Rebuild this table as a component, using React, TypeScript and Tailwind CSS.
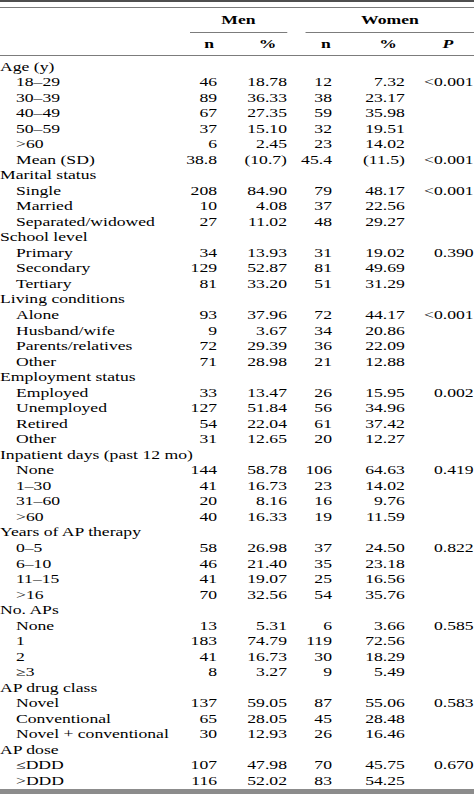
import React from "react";

type Row =
  | { kind: "cat"; label: string }
  | { kind: "item"; label: string; mn: string; mp: string; wn: string; wp: string; p?: string };

const c = (label: string): Row => ({ kind: "cat", label });
const r = (label: string, mn: string, mp: string, wn: string, wp: string, p?: string): Row => ({
  kind: "item",
  label,
  mn,
  mp,
  wn,
  wp,
  p,
});

const rows: Row[] = [
  c("Age (y)"),
  r("18–29", "46", "18.78", "12", "7.32", "<0.001"),
  r("30–39", "89", "36.33", "38", "23.17"),
  r("40–49", "67", "27.35", "59", "35.98"),
  r("50–59", "37", "15.10", "32", "19.51"),
  r(">60", "6", "2.45", "23", "14.02"),
  r("Mean (SD)", "38.8", "(10.7)", "45.4", "(11.5)", "<0.001"),
  c("Marital status"),
  r("Single", "208", "84.90", "79", "48.17", "<0.001"),
  r("Married", "10", "4.08", "37", "22.56"),
  r("Separated/widowed", "27", "11.02", "48", "29.27"),
  c("School level"),
  r("Primary", "34", "13.93", "31", "19.02", "0.390"),
  r("Secondary", "129", "52.87", "81", "49.69"),
  r("Tertiary", "81", "33.20", "51", "31.29"),
  c("Living conditions"),
  r("Alone", "93", "37.96", "72", "44.17", "<0.001"),
  r("Husband/wife", "9", "3.67", "34", "20.86"),
  r("Parents/relatives", "72", "29.39", "36", "22.09"),
  r("Other", "71", "28.98", "21", "12.88"),
  c("Employment status"),
  r("Employed", "33", "13.47", "26", "15.95", "0.002"),
  r("Unemployed", "127", "51.84", "56", "34.96"),
  r("Retired", "54", "22.04", "61", "37.42"),
  r("Other", "31", "12.65", "20", "12.27"),
  c("Inpatient days (past 12 mo)"),
  r("None", "144", "58.78", "106", "64.63", "0.419"),
  r("1–30", "41", "16.73", "23", "14.02"),
  r("31–60", "20", "8.16", "16", "9.76"),
  r(">60", "40", "16.33", "19", "11.59"),
  c("Years of AP therapy"),
  r("0–5", "58", "26.98", "37", "24.50", "0.822"),
  r("6–10", "46", "21.40", "35", "23.18"),
  r("11–15", "41", "19.07", "25", "16.56"),
  r(">16", "70", "32.56", "54", "35.76"),
  c("No. APs"),
  r("None", "13", "5.31", "6", "3.66", "0.585"),
  r("1", "183", "74.79", "119", "72.56"),
  r("2", "41", "16.73", "30", "18.29"),
  r("≥3", "8", "3.27", "9", "5.49"),
  c("AP drug class"),
  r("Novel", "137", "59.05", "87", "55.06", "0.583"),
  r("Conventional", "65", "28.05", "45", "28.48"),
  r("Novel + conventional", "30", "12.93", "26", "16.46"),
  c("AP dose"),
  r("≤DDD", "107", "47.98", "70", "45.75", "0.670"),
  r(">DDD", "116", "52.02", "83", "54.25"),
];

const GRID = "grid grid-cols-[110px_32.8px_46px_29.6px_48px_45.4px]";

function PValue({ p }: { p?: string }) {
  if (!p) return <span />;
  if (p.startsWith("<")) {
    return (
      <span className="whitespace-nowrap">
        <span className="-ml-[6.5px]">&lt;</span>
        {p.slice(1)}
      </span>
    );
  }
  return <span className="whitespace-nowrap">{p}</span>;
}

export default function App() {
  return (
    <div className="w-[474px] h-[798px] overflow-hidden bg-white">
      <div className="w-[311.8px] origin-top-left scale-x-[1.52] font-['Liberation_Serif','Times_New_Roman',serif] text-[11.6px] text-black">
        <div className="h-[2px] bg-[#4f4f4f]" />
        <div className="h-[5px]" />
        <div className="h-[1px] bg-[#7c7c7c]" />

        {/* header row 1 */}
        <div className={GRID}>
          <div />
          <div className="col-span-2 ml-[15px] border-b border-[#7c7c7c] pt-[1px] text-center font-bold leading-[23px]">
            Men
          </div>
          <div className="col-span-3 ml-[12.5px] border-b border-[#7c7c7c] pt-[1px] text-center font-bold leading-[23px]">
            Women
          </div>
        </div>

        {/* header row 2 */}
        <div className={`${GRID} pt-[2px] font-bold leading-[20px]`}>
          <div />
          <div className="pr-[2px] text-right">n</div>
          <div className="pr-[7px] text-right">%</div>
          <div className="pr-[0.7px] text-right">n</div>
          <div className="pr-[5.3px] text-right">%</div>
          <div className="pl-[24.8px] italic">P</div>
        </div>

        <div className="h-[1px] bg-[#7c7c7c]" />

        <div className="pt-[3.5px]">
          {rows.map((row, i) =>
            row.kind === "cat" ? (
              <div key={i} className="whitespace-nowrap leading-[15.53px]">
                {row.label}
              </div>
            ) : (
              <div key={i} className={`${GRID} leading-[15.53px]`}>
                <div className="whitespace-nowrap pl-[10.5px]">{row.label}</div>
                <div className="text-right">{row.mn}</div>
                <div className="text-right">{row.mp}</div>
                <div className="text-right">{row.wn}</div>
                <div className="text-right">{row.wp}</div>
                <div className="pl-[19.1px]">
                  <PValue p={row.p} />
                </div>
              </div>
            )
          )}
        </div>

        <div className="h-[5px] bg-[#8c8c8c]" />
      </div>
    </div>
  );
}
